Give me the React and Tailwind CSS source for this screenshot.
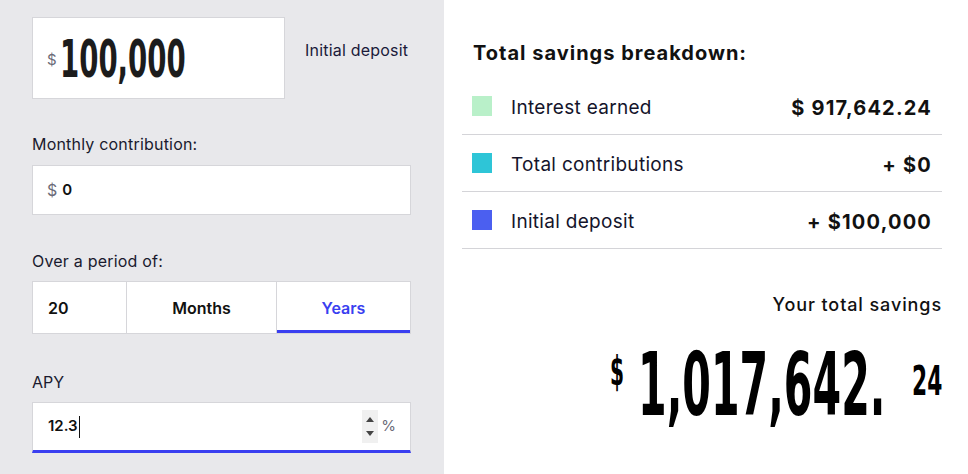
import React from 'react';

const body = { fontFamily: 'Inter, "Noto Sans", sans-serif' };
const narrow = { fontFamily: '"DejaVu Sans Condensed", "Liberation Sans Narrow", "Liberation Sans", sans-serif' };

const rows = [
    { label: 'Interest earned', value: '$ 917,642.24', color: 'bg-[#b9f0c9]' },
    { label: 'Total contributions', value: '+ $0', color: 'bg-[#2ec5d7]' },
    { label: 'Initial deposit', value: '+ $100,000', color: 'bg-[#4b5ff0]' },
];

// squeezes a wide bold face into the narrow display look of the figures
const Squeeze = ({ w, scale, className, children }) => (
    <span className={`inline-block whitespace-nowrap ${w}`}>
        <span className={`inline-block origin-left ${scale} ${className}`} style={narrow}>
            {children}
        </span>
    </span>
);

export default function App() {
    return (
        <div className="flex w-[968px] h-[474px] overflow-hidden bg-white text-[#111]" style={body}>
            {/* Left: inputs */}
            <div className="w-[444px] shrink-0 bg-[#e8e8eb] pl-8 pt-[17px]">
                <div className="flex items-start">
                    <div className="w-[253px] h-[82px] bg-white border border-[#d6d6da] flex items-center pl-[14px]">
                        <span className="text-[15px] text-[#6b6b78] mt-[4px] mr-[3px]">$</span>
                        <Squeeze w="w-[128px]" scale="scale-x-[0.59]" className="text-[52px] font-bold leading-none text-[#1c1c1c] mt-[2px]">
                            100,000
                        </Squeeze>
                    </div>
                    <span className="ml-5 mt-[21px] text-[16px] tracking-[0.2px] text-[#1a1a3a]">Initial deposit</span>
                </div>

                <div className="mt-[35px] text-[16px] leading-5 tracking-[0.2px] text-[#1a1a2e]">Monthly contribution:</div>
                <div className="mt-[11px] w-[379px] h-[50px] bg-white border border-[#d6d6da] flex items-center pl-[14px] text-[15px] font-semibold">
                    <span className="text-[#6b6b78] mr-[5px] font-normal text-[16px]">$</span>
                    <span>0</span>
                </div>

                <div className="mt-[36px] text-[16px] leading-5 tracking-[0.2px] text-[#1a1a2e]">Over a period of:</div>
                <div className="mt-[10px] w-[379px] h-[53px] bg-white border border-[#d6d6da] flex text-[16px] font-semibold">
                    <div className="w-[94px] flex items-center pl-[15px] border-r border-[#d6d6da]">20</div>
                    <div className="w-[150px] flex items-center justify-center border-r border-[#d6d6da]">Months</div>
                    <div className="flex-1 flex items-center justify-center text-[#3a3ff0] border-b-[3px] border-[#3a3ff0] pt-[3px]">
                        Years
                    </div>
                </div>

                <div className="mt-[38px] text-[16px] leading-5 text-[#1a1a2e]">APY</div>
                <div className="mt-[10px] w-[379px] h-[51px] bg-white border border-[#d6d6da] border-b-[3px] border-b-[#3a3ff0] flex items-center pl-[15px] pr-[14px] text-[15px] font-semibold">
                    <span>12.3</span>
                    <span className="w-px h-[22px] bg-[#111] ml-[1px]" />
                    <div className="ml-auto w-[16px] h-[33px] bg-[#f0f0f0] flex flex-col items-center justify-center gap-[9px]">
                        <svg width="8" height="5" viewBox="0 0 8 5"><path d="M0 5 L4 0 L8 5 Z" fill="#444" /></svg>
                        <svg width="8" height="5" viewBox="0 0 8 5"><path d="M0 0 L4 5 L8 0 Z" fill="#444" /></svg>
                    </div>
                    <span className="ml-[3px] text-[15px] font-normal text-[#6b6b78]">%</span>
                </div>
            </div>

            {/* Right: breakdown */}
            <div className="w-[524px] min-w-0 shrink-0 pl-[18px] pr-[26px] pt-[41px]">
                <h2 className="pl-[11px] text-[20px] leading-6 font-bold tracking-[1px]">Total savings breakdown:</h2>
                <div className="mt-[13px]">
                    {rows.map((r) => (
                        <div key={r.label} className="h-[57px] flex items-center border-b border-[#d4d4d8] pl-[10px] pr-[10px]">
                            <span className={`w-[20px] h-[20px] ${r.color}`} />
                            <span className="ml-[19px] pt-1 text-[19px] tracking-[0.3px] text-[#14142b]">{r.label}</span>
                            <span className="ml-auto pt-1 text-[20px] font-bold tracking-[1.2px]">{r.value}</span>
                        </div>
                    ))}
                </div>
                <div className="mt-[44px] text-right text-[18px] leading-6 font-medium tracking-[0.9px]">Your total savings</div>
                <div className="mt-[24px] flex justify-end items-start text-black">
                    <Squeeze w="w-[16px]" scale="scale-x-[0.56]" className="text-[40px] leading-none font-bold mt-[10px]">
                        $
                    </Squeeze>
                    <span className="w-[12px]" />
                    <Squeeze w="w-[252px]" scale="scale-x-[0.52]" className="text-[88px] leading-none font-bold">
                        1,017,642.
                    </Squeeze>
                    <span className="w-[22px]" />
                    <Squeeze w="w-[30px]" scale="scale-x-[0.59]" className="text-[41px] leading-none font-bold mt-[20px]">
                        24
                    </Squeeze>
                </div>
            </div>
        </div>
    );
}
